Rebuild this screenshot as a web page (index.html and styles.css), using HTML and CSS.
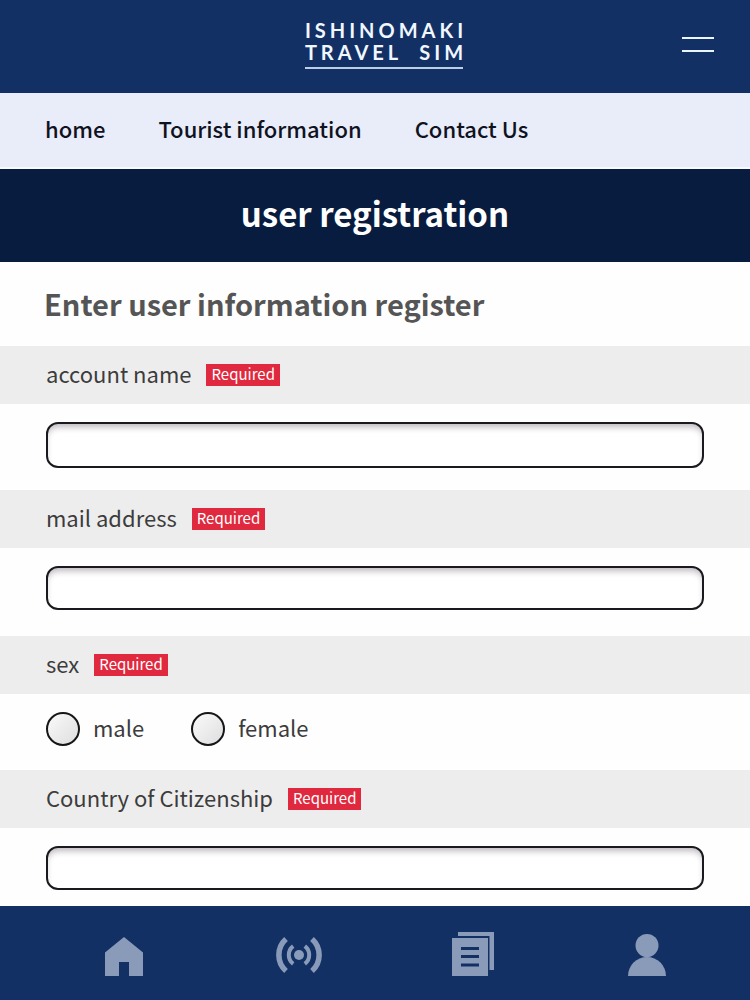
FILE: index.html
```html
<!DOCTYPE html>
<html lang="en">
<head>
    <meta charset="UTF-8">
    <meta name="viewport" content="width=device-width, initial-scale=1">
    <title>Ishinomaki Travel SIM</title>
    <link rel="stylesheet" href="styles.css">
</head>
<body>
    <header class="header">
        <a class="logo" href="/">
            <span class="logo-line">ISHINOMAKI</span>
            <span class="logo-line"><span>TRAVEL</span> <span>SIM</span></span>
        </a>
        <button type="button" class="menu-button" aria-label="Menu">
            <span class="menu-bar"></span>
            <span class="menu-bar"></span>
        </button>
    </header>

    <nav class="nav">
        <a href="/">home</a>
        <a href="/tourist">Tourist information</a>
        <a href="/contact">Contact Us</a>
    </nav>

    <h1 class="page-title">user registration</h1>

    <main class="main">
        <h2 class="lead">Enter user information register</h2>

        <form method="POST" action="/register">
            <div class="field-head">
                <label class="field-label" for="account_name">account name</label>
                <span class="required">Required</span>
            </div>
            <div class="field-body">
                <input class="text-box text-box-tall" type="text" id="account_name" name="account_name" required>
            </div>

            <div class="field-head">
                <label class="field-label" for="mail_address">mail address</label>
                <span class="required">Required</span>
            </div>
            <div class="field-body field-body-mail">
                <input class="text-box" type="email" id="mail_address" name="mail_address" required>
            </div>

            <div class="field-head">
                <span class="field-label" id="sex_label">sex</span>
                <span class="required">Required</span>
            </div>
            <div class="field-body radio-group" role="radiogroup" aria-labelledby="sex_label">
                <div class="radio-item">
                    <input class="radio" type="radio" id="male" name="sex" value="male" required>
                    <label class="field-label" for="male">male</label>
                </div>
                <div class="radio-item">
                    <input class="radio" type="radio" id="female" name="sex" value="female">
                    <label class="field-label" for="female">female</label>
                </div>
            </div>

            <div class="field-head">
                <label class="field-label" for="citizenship">Country of Citizenship</label>
                <span class="required">Required</span>
            </div>
            <div class="field-body field-body-last">
                <input class="text-box" type="text" id="citizenship" name="citizenship" required>
            </div>
        </form>
    </main>

    <footer class="tab-bar">
        <a href="/" aria-label="Home">
            <svg width="48" height="48" viewBox="0 0 48 48" fill="currentColor">
                <path d="M24 6 43 21.500V45H29V31H19V45H5V21.500Z"/>
            </svg>
        </a>
        <a href="/wifi" aria-label="Signal">
            <svg width="48" height="48" viewBox="-1 0 48 48" fill="none" stroke="currentColor">
                <circle cx="24" cy="24" r="5" fill="currentColor" stroke="none"/>
                <path stroke-width="4" d="M18.200 15.200a11 11 0 0 0 0 17.600M29.800 15.200a11 11 0 0 1 0 17.600"/>
                <path stroke-width="5.500" d="M11 8a21.500 21.500 0 0 0 0 32M37 8a21.500 21.500 0 0 1 0 32"/>
            </svg>
        </a>
        <a href="/news" aria-label="News">
            <svg width="48" height="48" viewBox="0 0 48 48" fill="currentColor">
                <path d="M9 1H45V39H40.500V5H9Z"/>
                <path fill-rule="evenodd" d="M3 7H39V45H3ZM12 16v3h18v-3ZM12 24v3h18v-3ZM12 32.500v3h18v-3Z"/>
            </svg>
        </a>
        <a href="/mypage" aria-label="My page">
            <svg width="48" height="48" viewBox="0 0 48 48" fill="currentColor">
                <circle cx="24" cy="14.500" r="11.500"/>
                <path d="M5 45a19 19 0 0 1 38 0Z"/>
            </svg>
        </a>
    </footer>
</body>
</html>
```
FILE: styles.css
```css
* {
    box-sizing: border-box;
}

body {
    display: flex;
    flex-direction: column;
    min-height: 100vh;
    margin: 0;
    font-family: "Noto Sans CJK JP", "Noto Sans", sans-serif;
    font-size: 22px;
    line-height: 34px;
    color: #3c3c3c;
    background-color: #fefefe;
}

.header {
    display: grid;
    grid-template-columns: 1fr auto 1fr;
    align-items: center;
    height: 93px;
    padding: 0 36px 5px 58px;
    background-color: #133065;
}

.logo {
    grid-column: 2;
    font-family: Lato, sans-serif;
    font-size: 20px;
    font-weight: 700;
    line-height: 22px;
    letter-spacing: 4px;
    color: #f1f7ff;
    text-decoration: none;
}

/* underline stops before the spacing of the last letter */
.logo::after {
    content: "";
    display: block;
    height: 2px;
    margin: 4px 4px 0 0;
    background-color: #b9cfe6;
}

.logo-line {
    display: flex;
    justify-content: space-between;
}

.menu-button {
    display: flex;
    flex-direction: column;
    gap: 11px;
    justify-self: end;
    width: 32px;
    padding: 0;
    border: none;
    background: none;
    cursor: pointer;
}

.menu-bar {
    height: 2px;
    background-color: #e8f6ff;
}

.nav {
    display: flex;
    gap: 53px;
    padding: 18px 45px 22px;
    border-bottom: 2px solid #f8faff;
    background-color: #e9edfa;
    font-weight: 500;
}

.nav a {
    color: #10131f;
    text-decoration: none;
}

.page-title {
    margin: 0;
    padding: 20px 0 25px;
    background-color: #081c40;
    color: #fff;
    font-size: 33px;
    font-weight: 700;
    line-height: 48px;
    text-align: center;
}

.lead {
    margin: 0;
    padding: 17px 44px 19px;
    color: #555;
    font-size: 29px;
    font-weight: 700;
    line-height: 48px;
}

.field-head {
    display: flex;
    align-items: center;
    gap: 15px;
    padding: 12px 46px;
    background-color: #eeedee;
}

.field-label {
    padding-bottom: 4px;
    line-height: 30px;
}

.required {
    padding: 0 5px 2px;
    background-color: #e0293e;
    color: #fff;
    font-size: 15px;
    line-height: 20px;
}

.field-body {
    padding: 18px 46px 22px;
}

.field-body-mail {
    padding-bottom: 26px;
}

.field-body-last {
    padding-bottom: 16px;
}

.text-box {
    display: block;
    width: 100%;
    height: 44px;
    padding: 0 12px;
    border: 2px solid #1a1a1e;
    border-radius: 12px;
    background-color: #fff;
    box-shadow: inset 0 5px 6px -2px rgba(40, 20, 40, 0.3);
    font: inherit;
}

.text-box-tall {
    height: 46px;
}

.radio-group {
    display: flex;
    gap: 47px;
    padding-bottom: 24px;
}

.radio-item {
    display: flex;
    align-items: center;
    gap: 13px;
}

.radio {
    appearance: none;
    width: 34px;
    height: 34px;
    margin: 0;
    border: 2px solid #161616;
    border-radius: 50%;
    background: linear-gradient(135deg, #fafafa, #dedee0);
}

.radio:checked {
    background: radial-gradient(#133065 40%, #eee 45%);
}

.tab-bar {
    display: flex;
    position: sticky;
    bottom: 0;
    justify-content: space-between;
    margin-top: auto;
    padding: 25px 79px 21px 100px;
    background-color: #133065;
}

.tab-bar a {
    color: #899bb9;
}

.tab-bar svg {
    display: block;
}
```
